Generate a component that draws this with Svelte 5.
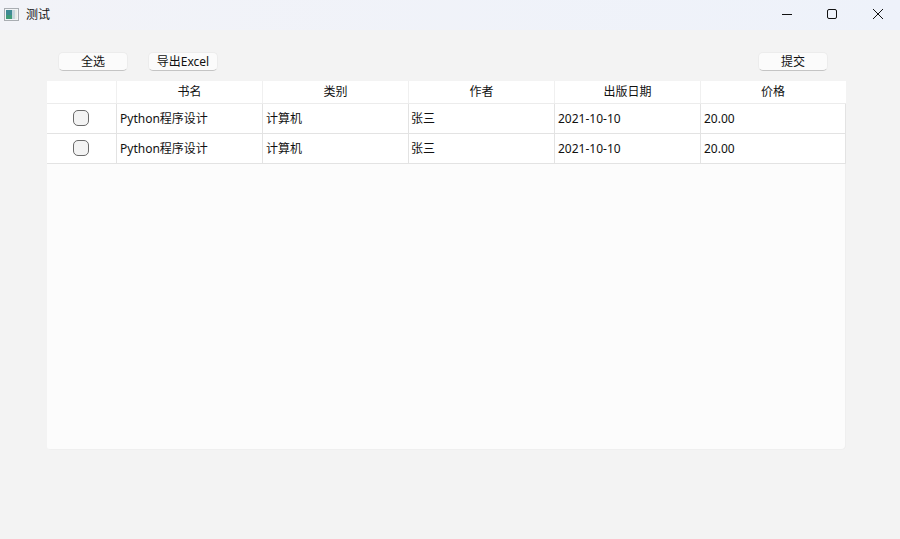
<script>
  const headers = ['', '书名', '类别', '作者', '出版日期', '价格'];
  const rows = [
    ['Python程序设计', '计算机', '张三', '2021-10-10', '20.00'],
    ['Python程序设计', '计算机', '张三', '2021-10-10', '20.00']
  ];
</script>

<div class="window">
  <header class="titlebar">
    <div class="title">
      <svg class="appicon" width="15" height="13" viewBox="0 0 15 13">
        <rect x="0.5" y="0.5" width="14" height="12" fill="#f2f4f6" stroke="#a9adb2"/>
        <rect x="2" y="2" width="6" height="9" fill="#3f8a94"/>
        <rect x="2" y="7" width="6" height="4" fill="#3e9a78"/>
        <rect x="8" y="2" width="3" height="9" fill="#c5d6dc"/>
        <rect x="11" y="2" width="2" height="9" fill="#e8ebe6"/>
      </svg>
      <span>测试</span>
    </div>
    <div class="controls">
      <svg width="46" height="30" viewBox="0 0 46 30"><path d="M19 14.5H29" stroke="#111" fill="none"/></svg>
      <svg width="46" height="30" viewBox="0 0 46 30"><rect x="18.5" y="9.5" width="9" height="9" rx="1.5" stroke="#111" fill="none"/></svg>
      <svg width="46" height="30" viewBox="0 0 46 30"><path d="M18 9L28 19M28 9L18 19" stroke="#111" fill="none"/></svg>
    </div>
  </header>

  <div class="toolbar">
    <div class="group">
      <button>全选</button>
      <button>导出Excel</button>
    </div>
    <button>提交</button>
  </div>

  <div class="table">
    <div class="row head">
      {#each headers as h}
        <div class="cell">{h}</div>
      {/each}
    </div>
    {#each rows as row}
      <div class="row body">
        <div class="cell check"><span class="box"></span></div>
        {#each row as value}
          <div class="cell">{value}</div>
        {/each}
      </div>
    {/each}
  </div>
</div>

<style>
  :global(body) {
    margin: 0;
    background: #f3f3f3;
  }
  .window {
    width: 900px;
    height: 539px;
    overflow: hidden;
    font-family: "Noto Sans", "Noto Sans CJK SC", sans-serif;
    font-size: 12px;
    color: #111;
    background: #f3f3f3;
  }
  .titlebar {
    height: 30px;
    display: flex;
    justify-content: space-between;
    background: linear-gradient(90deg, #f2f3f8, #eef2fa);
  }
  .title {
    display: flex;
    align-items: center;
    gap: 7px;
    padding-left: 4px;
    height: 28px;
  }
  .appicon {
    margin-top: 1px;
  }
  .controls {
    display: flex;
    margin-right: -1px;
  }
  .controls svg {
    display: block;
  }
  .toolbar {
    display: flex;
    justify-content: space-between;
    align-items: flex-start;
    padding: 22px 72px 0 58px;
    height: 29px;
  }
  .group {
    display: flex;
    gap: 20px;
  }
  button {
    width: 70px;
    height: 19px;
    padding: 0;
    border: 1px solid #ececec;
    border-bottom-color: #c4c4c4;
    border-radius: 5px;
    background: #fbfbfb;
    font: inherit;
    line-height: 16px;
    color: #111;
  }
  .table {
    width: 799px;
    height: 369px;
    margin-left: 47px;
    box-sizing: border-box;
    background: #fcfcfc;
    box-shadow: inset -1px -1px 0 #efefef;
    border-radius: 0 0 4px 4px;
    overflow: hidden;
  }
  .row {
    display: grid;
    grid-template-columns: 70px repeat(4, 146px) 145px;
    box-sizing: border-box;
    background: #fff;
    border-bottom: 1px solid #e3e3e3;
  }
  .head {
    height: 23px;
    border-bottom-color: #ececec;
  }
  .body {
    height: 30px;
  }
  .cell {
    display: flex;
    align-items: center;
    box-sizing: border-box;
    padding-left: 3px;
    border-right: 1px solid #e3e3e3;
    line-height: 16px;
    white-space: nowrap;
  }
  .body .cell:nth-child(4) {
    padding-left: 2px;
  }
  .head .cell {
    justify-content: center;
    padding: 0;
    border-right-color: #f0f0f0;
  }
  .head .cell:last-child {
    border-right-color: #fff;
  }
  .check {
    padding-left: 26px;
  }
  .box {
    width: 14px;
    height: 14px;
    margin-bottom: 1px;
    border: 1px solid #6a6a6a;
    border-radius: 5px;
    background: #f3f3f3;
  }
</style>
